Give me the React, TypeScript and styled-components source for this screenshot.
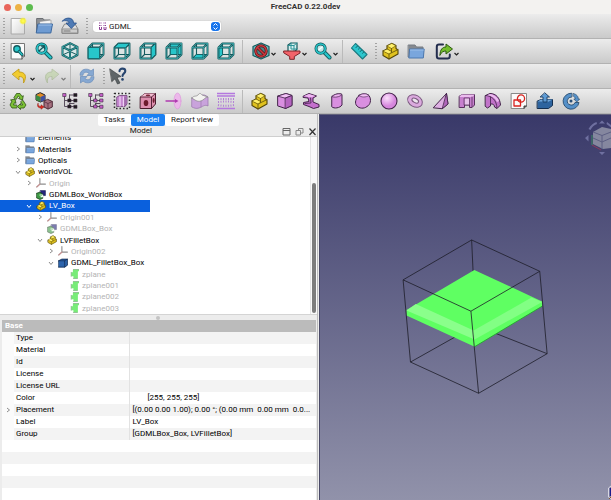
import React from "react";
import styled, { createGlobalStyle } from "styled-components";

const GlobalStyle = createGlobalStyle`
  * { box-sizing: border-box; }
  body { margin: 0; background: #ececec; color: #161616; font: 400 8px/12px Roboto, "Liberation Sans", sans-serif; }
  button, select { font: inherit; color: inherit; border: 0; padding: 0; margin: 0; background: none; }
  ul { list-style: none; margin: 0; padding: 0; }
`;

/* ---------- layout ---------- */

const Window = styled.div`
  display: flex;
  flex-direction: column;
  height: 100vh;
  overflow: hidden;
`;

const TitleBar = styled.header`
  display: grid;
  grid-template-columns: 1fr auto 1fr;
  align-items: center;
  height: 14px;
  flex: none;
  background: #f3f2f0;
`;

const Lights = styled.div`
  display: flex;
  gap: 4px;
  padding-left: 4px;
`;

const Light = styled.button<{ $color: string }>`
  width: 7px;
  height: 7px;
  border-radius: 50%;
  background: ${(p) => p.$color};
`;

const WindowTitle = styled.h1`
  margin: 0;
  font-size: 8px;
  line-height: 12px;
  font-weight: 700;
  color: #333;
`;

const Toolbar = styled.div`
  display: flex;
  align-items: center;
  height: 25px;
  flex: none;
  border-bottom: 1px solid #b2b2b2;
  background: linear-gradient(#ececec, #cacaca);
`;

const Handle = styled.span`
  width: 5px;
  height: 17px;
  flex: none;
  background: repeating-linear-gradient(#a2a2a2 0 1px, transparent 1px 3px) right / 2px 100% no-repeat;
`;

const Separator = styled.span`
  width: 1px;
  height: 23px;
  margin: 0 3px;
  flex: none;
  background: #bababa;
`;

const ToolButton = styled.button<{ $menu?: boolean; $faded?: boolean }>`
  display: flex;
  align-items: center;
  justify-content: ${(p) => (p.$menu ? "flex-end" : "center")};
  width: ${(p) => (p.$menu ? 31 : 26)}px;
  height: 22px;
  flex: none;
  opacity: ${(p) => (p.$faded ? 0.5 : 1)};
`;

const WorkbenchBox = styled.label`
  position: relative;
  display: flex;
  width: 128px;
  height: 11px;
  margin-left: 5px;
  border-radius: 3px;
  background: #fff;
  box-shadow: 0 0 1px #999;
`;

const WorkbenchSelect = styled.select`
  appearance: none;
  width: 100%;
  padding-left: 16px;
  line-height: 11px;
  outline: 0;
`;

const WorkbenchIcon = styled.span`
  position: absolute;
  left: 5px;
  top: 1px;
  display: flex;
`;

const Stepper = styled.span`
  position: absolute;
  right: 1px;
  top: 1px;
  display: flex;
  border-radius: 3px;
  background: #1674ec;
  pointer-events: none;
`;

const Workspace = styled.main`
  display: flex;
  flex: 1;
  min-height: 0;
`;

const SidePanel = styled.section`
  display: flex;
  flex-direction: column;
  flex: 0 0 52%;
  min-width: 0;
  background: #ececec;
  border-right: 1px solid #bdbdbd;
`;

const Tabs = styled.div`
  display: flex;
  justify-content: center;
  height: 12px;
  flex: none;
`;

const Tab = styled.button<{ $active?: boolean }>`
  padding: 0 6px;
  line-height: 12px;
  border-radius: 2px;
  background: ${(p) => (p.$active ? "#1a80f2" : "#fff")};
  color: ${(p) => (p.$active ? "#fff" : "#222")};
`;

const DockTitle = styled.div`
  display: flex;
  align-items: center;
  height: 11px;
  flex: none;
  border-bottom: 1px solid #cfcfcf;
`;

const DockName = styled.h2`
  flex: 1;
  margin: 0;
  text-align: center;
  font-size: 8px;
  line-height: 10px;
  font-weight: 400;
`;

const DockButtons = styled.div`
  display: flex;
  gap: 4px;
  button { display: flex; }
`;

const TreePane = styled.div`
  display: flex;
  align-items: flex-end;
  flex: 177 1 0;
  min-height: 0;
  overflow: hidden;
  background: #fff;
`;

const Tree = styled.ul`
  display: grid;
  grid-auto-rows: 1fr;
  height: 182px;
  flex: 1;
`;

const TreeRow = styled.li<{ $depth: number; $tone?: string }>`
  display: flex;
  align-items: center;
  gap: 2px;
  width: 150px;
  padding-left: ${(p) => 13 + p.$depth * 11}px;
  line-height: 11px;
  white-space: nowrap;
  background: ${(p) => (p.$tone === "selected" ? "#0a60dd" : "transparent")};
  color: ${(p) => (p.$tone === "selected" ? "#fff" : p.$tone === "hidden" ? "#b4b4b4" : "#000")};
`;

const Branch = styled.button`
  display: flex;
  justify-content: center;
  width: 10px;
  flex: none;
  color: #8c8c8c;
  li[aria-selected="true"] & { color: #fff; }
`;

const BranchSpace = styled.span`
  width: 10px;
  flex: none;
`;

const RowIcon = styled.span<{ $faded: boolean }>`
  display: flex;
  width: 11px;
  flex: none;
  opacity: ${(p) => (p.$faded ? 0.6 : 1)};
`;

const ScrollTrack = styled.div`
  display: flex;
  justify-content: center;
  align-items: flex-end;
  align-self: stretch;
  width: 7px;
  padding-bottom: 1px;
  border-left: 1px solid #e6e6e6;
  background: #fafafa;
`;

const ScrollThumb = styled.div`
  width: 4px;
  height: 74%;
  border-radius: 2px;
  background: #7d7d7d;
`;

const Splitter = styled.div`
  display: flex;
  justify-content: center;
  align-items: center;
  height: 6px;
  flex: none;
  border-top: 1px solid #d4d4d4;
  &::after { content: ""; width: 4px; height: 4px; border-radius: 50%; background: #c4c4c4; }
`;

const PropertyPane = styled.div`
  flex: 180 1 0;
  min-height: 0;
  overflow: hidden;
  margin: 0 1px 0 2px;
  background: repeating-linear-gradient(#fff 0 12px, #f3f3f3 12px 24px);
`;

const PropertyTable = styled.table`
  width: 100%;
  table-layout: fixed;
  border-collapse: collapse;
  text-align: left;
  color: #000;
  tr { height: 12px; }
  th, td { padding: 0; height: 12px; font-weight: 400; white-space: nowrap; overflow: hidden; text-overflow: ellipsis; }
  thead th { padding-left: 3px; background: #bbb; color: #fff; font-weight: 700; }
`;

const ToggleCell = styled.td`
  width: 12px;
  background: #fbfbfb;
  button { display: flex; margin: 0 auto; color: #8c8c8c; }
`;

const NameCell = styled.th`
  && { padding-left: 2px; }
  border-right: 1px solid #e2e2e2;
`;

const ValueCell = styled.td<{ $inset?: boolean }>`
  && { padding: 0 4px 0 ${(p) => (p.$inset ? 18 : 3)}px; white-space: pre; }
`;

const Viewport = styled.section`
  position: relative;
  flex: 1;
  min-width: 0;
  margin-left: 1px;
  overflow: hidden;
  border-left: 1px solid #4a4a68;
  border-top: 1px solid #62627c;
  background: linear-gradient(#393969, #9192aa);
`;

const Scene = styled.svg`
  display: block;
  width: 100%;
  height: 100%;
`;

const NavCube = styled.svg`
  position: absolute;
  top: 2px;
  right: 0;
`;

const AxisCross = styled.svg`
  position: absolute;
  right: 0;
  bottom: 0;
`;

/* ---------- icons ---------- */

const Svg = ({ size = 18, children }: { size?: number; children: React.ReactNode }) => (
  <svg width={size} height={size} viewBox="0 0 18 18" fill="none" strokeLinejoin="round" strokeLinecap="round" aria-hidden="true">
    {children}
  </svg>
);

const INK = "#145a5e";
const TEAL = "#27c6ca";

const Wire = ({ d, w = 1 }: { d: string; w?: number }) => (
  <>
    <path d={d} stroke={INK} strokeWidth={w + 1} />
    <path d={d} stroke="#45b4b6" strokeWidth={w * 0.7} />
  </>
);

const FACES: Record<string, string> = {
  front: "M1.500 5.500H12.500V16.500H1.500Z",
  top: "M1.500 5.500L5.500 1.500H16.500L12.500 5.500Z",
  right: "M12.500 5.500L16.500 1.500V12.500L12.500 16.500Z",
  rear: "M5.500 1.500H16.500V12.500H5.500Z",
  bottom: "M1.500 16.500L5.500 12.500H16.500L12.500 16.500Z",
  left: "M1.500 5.500L5.500 1.500V12.500L1.500 16.500Z",
};

const ViewCube = ({ face }: { face: string }) => {
  const behind = face === "rear" || face === "bottom" || face === "left";
  const fill = <path d={FACES[face]} fill={TEAL} stroke={INK} strokeWidth=".8" />;
  return (
    <Svg>
      <path d="M1.500 5.500L5.500 1.500H16.500V12.500L12.500 16.500H1.500Z" fill="#dcebea" fillOpacity=".6" />
      <path d="M5.500 1.500V12.500H16.500M5.500 12.500L1.500 16.500" stroke={INK} strokeWidth="1.100" />
      {behind && fill}
      <Wire d="M1.500 5.500H12.500V16.500H1.500ZM1.500 5.500L5.500 1.500H16.500L12.500 5.500M16.500 1.500V12.500L12.500 16.500" w={0.9} />
      {!behind && fill}
    </Svg>
  );
};

const IsoCube = () => (
  <Svg>
    <path d="M9 1.200L16.500 5V13L9 16.800L1.500 13V5Z" fill="#d8e9e8" />
    <path d="M9 1.200V9.500M1.500 13L9 9.500L16.500 13" stroke={INK} strokeWidth="1" />
    <Wire d="M9 1.200L16.500 5V13L9 16.800L1.500 13V5ZM1.500 5L9 8.500L16.500 5M9 8.500V16.500" w={1} />
  </Svg>
);

const Lens = () => (
  <>
    <path d="M10 10L15.500 15.500" stroke={INK} strokeWidth="4" />
    <path d="M10 10L15.500 15.500" stroke={TEAL} strokeWidth="2.400" />
    <circle cx="6.600" cy="6.600" r="4.600" stroke={INK} strokeWidth="3" fill="#c4e6e6" />
    <circle cx="6.600" cy="6.600" r="4.600" stroke={TEAL} strokeWidth="1.600" />
  </>
);

const FitAll = () => (
  <Svg>
    <path d="M2.500 1.500H15.500V14L13 17H2.500Z" fill="#fbfbfb" stroke="#777" />
    <path d="M15.500 14H13V17" fill="#ddd" stroke="#444" />
    <circle cx="8" cy="7" r="3.200" fill={TEAL} stroke={INK} strokeWidth="1.400" />
    <path d="M10.200 9.400L13 12.600" stroke={INK} strokeWidth="3" />
    <path d="M10.200 9.400L13 12.600" stroke={TEAL} strokeWidth="1.400" />
  </Svg>
);

const FitSelection = () => (
  <Svg>
    <Lens />
    <path d="M4 9L9.500 4M6.500 4H9.500V7" stroke={INK} strokeWidth="1.300" />
  </Svg>
);

const ZoomIcon = () => (
  <Svg>
    <Lens />
    <path d="M5 7.500L8.200 5" stroke="#f4ffff" strokeWidth="1.400" />
  </Svg>
);

const NoEntry = () => (
  <Svg>
    <path d="M9 1L17 4.500V13.500L9 17L1 13.500V4.500Z" fill="#6cc3c6" stroke={INK} strokeWidth="1.200" />
    <circle cx="9" cy="9" r="5.300" fill="#4c8286" stroke="#5a1418" strokeWidth="3" />
    <path d="M5.500 5.500L12.500 12.500" stroke="#5a1418" strokeWidth="3" />
    <circle cx="9" cy="9" r="5.300" stroke="#cc3a40" strokeWidth="1.500" />
    <path d="M5.500 5.500L12.500 12.500" stroke="#cc3a40" strokeWidth="1.500" />
  </Svg>
);

const Funnel = () => (
  <Svg>
    <path d="M5 3L8 1H14V7L11.500 10H5Z" fill="#d5efef" stroke={INK} strokeWidth="1.200" />
    <path d="M5 3.500H11V9.500M11 3.500L14 1M8 1V7H14" stroke="#2c9498" strokeWidth="1" />
    <path d="M1 9H17V11L11.300 14.500V17.300H6.700V14.500L1 11Z" fill="#f2636a" stroke="#7c2227" strokeWidth="1" />
  </Svg>
);

const Ruler = () => (
  <Svg>
    <path d="M5.500 1.500L17 12.500L12.500 17L1.500 6Z" fill="#2cc6cd" stroke="#1c7b81" strokeWidth="1.100" />
    <path d="M7.300 4.200L6 5.600M9.400 6.200L8.400 7.200M11.500 8.200L10.200 9.600M13.600 10.200L12.600 11.200" stroke="#0d585e" strokeWidth=".9" />
  </Svg>
);

const Part = ({ size = 18 }: { size?: number }) => (
  <Svg size={size}>
    <path d="M2 9L6 7V4L11 1.500L15 3.500V6.500L17 8V12L8 17L2 13.500Z" fill="#e0c21e" stroke="#54470a" strokeWidth="1.100" />
    <path d="M6 4L10.500 6.500L15 3.800L11 1.500Z" fill="#fff06a" stroke="#6a5a0e" strokeWidth=".7" />
    <path d="M2 9L8 12L17 7.600M8 12V17M10.500 6.500V10.500M6 7L10.500 9.500" stroke="#6a5a0e" strokeWidth=".9" />
    <path d="M2.600 9L6 7.400L10 9.800L8 11.400Z" fill="#fff06a" />
  </Svg>
);

const Folder = ({ size = 18 }: { size?: number }) => (
  <Svg size={size}>
    <path d="M1.500 3H8L9.500 5H16V15H1.500Z" fill="#85898f" stroke="#777c84" />
    <path d="M3 7H17.200L16.300 16H2.200Z" fill="#79a6dd" stroke="#4d78ae" />
    <path d="M3.500 8H16.400" stroke="#a8c8ef" strokeWidth=".8" />
  </Svg>
);

const LinkIcon = () => (
  <Svg>
    <path d="M8 2.500H4Q1.800 2.500 1.800 4.700V14Q1.800 16.500 4 16.500H12.500Q14.800 16.500 14.800 14V12.500" stroke="#232d4e" strokeWidth="2" />
    <path d="M5 13C5 7.500 7.500 5 11 5V2L17.500 7L11 12V9C8.500 9 6.500 10 5 13Z" fill="#73bd2d" stroke="#2d5a12" strokeWidth="1" />
  </Svg>
);

const NewFile = () => (
  <Svg>
    <defs>
      <linearGradient id="sheet" x2="1" y2="1"><stop stopColor="#fff" /><stop offset="1" stopColor="#d8d8d8" /></linearGradient>
      <radialGradient id="spark"><stop stopColor="#ffff5e" /><stop offset=".55" stopColor="#f6ef3c" /><stop offset="1" stopColor="#f8f35a" stopOpacity="0" /></radialGradient>
    </defs>
    <path d="M2.500 1.500H15.500V17H2.500Z" fill="url(#sheet)" stroke="#aaa" />
    <circle cx="14" cy="4" r="4" fill="url(#spark)" />
  </Svg>
);

const OpenFile = () => (
  <Svg>
    <path d="M2 1.500H8L9 3H15V15H2Z" fill="#8c8f93" stroke="#6d7074" />
    <path d="M5 4.500L16 3V10H5Z" fill="#f4f4f4" stroke="#999" strokeWidth=".7" />
    <path d="M3.200 7H17.500L15.800 16H1.600Z" fill="#6e9bd2" stroke="#3c689f" />
    <path d="M4 8H16.400" stroke="#9fc1ea" />
  </Svg>
);

const SaveFile = () => (
  <Svg>
    <path d="M4 7H14L17 12V16.500H1V12Z" fill="#dedede" stroke="#888" />
    <path d="M1.500 12H16.500V16H1.500Z" fill="#cdcdcd" stroke="#909090" />
    <path d="M3 14H9" stroke="#777" strokeWidth="1.200" />
    <path d="M1.500 4C4 0 12.500 -.5 12.500 6H15.500L10.300 11.500L5 6H8C8 4 5 3 1.500 4Z" fill="#4f7bb5" stroke="#28508a" strokeWidth=".8" />
  </Svg>
);

const Undo = () => (
  <Svg>
    <path d="M1.500 7L8 2V5C14 5 16.500 9 12.500 16C13 11.500 12 9.500 8 9.500V12.500Z" fill="#f2cc2f" stroke="#c19a14" strokeWidth=".9" />
  </Svg>
);

const Redo = () => (
  <Svg>
    <path d="M16.500 7L10 2V5C4 5 1.500 9 5.500 16C5 11.500 6 9.500 10 9.500V12.500Z" fill="#b4cf93" stroke="#8ca56d" strokeWidth=".9" />
  </Svg>
);

const Refresh = () => (
  <Svg>
    <path d="M2 8C2 2 9 .5 13 4L15.500 2V8.500H9L11 6.300C8.500 4.400 5.500 5 5 8Z" fill="#86a8d2" stroke="#6a8cb9" strokeWidth=".7" />
    <path d="M16 10C16 16 9 17.500 5 14L2.500 16V9.500H9L7 11.700C9.500 13.600 12.500 13 13 10Z" fill="#86a8d2" stroke="#6a8cb9" strokeWidth=".7" />
  </Svg>
);

const WhatsThis = () => (
  <Svg>
    <path d="M1 2L12 9.500L8 10.500L11 16L8.500 17L6 11.800L3 14.500Z" fill="#5f6568" stroke="#3d4244" strokeWidth=".7" />
    <path d="M10.500 4.300C10.500 .6 16.300 1 16.300 4C16.300 6.500 13.500 6.300 13.500 9" stroke="#27456f" strokeWidth="2.100" />
    <circle cx="13.500" cy="12.400" r="1.300" fill="#27456f" />
  </Svg>
);

const Recycle = () => (
  <Svg>
    <g fill="#7cc136" stroke="#2f5513" strokeWidth=".8">
      <path d="M5 5.500L7.500 1.500H11L13 4.500L14.300 3.700L13.500 8L9.500 6.500L10.800 5.800L9.300 3.800L7.500 7Z" />
      <path d="M14 8.500L17 13L15 16H11.500V17.500L8.500 14.500L11.500 11.500V13H13.600L11.800 10Z" />
      <path d="M7.500 16H3L1 13L3 9L1.500 8L6 7L7 11.300L5.600 10.500L4.500 13H7.500Z" />
    </g>
  </Svg>
);

const ColourMap = () => (
  <Svg>
    <path d="M5.500 .8L10 3V8L5.500 10L1 8V3Z" fill="#e28b25" stroke="#222" />
    <path d="M1 3L5.500 5V10L1 8Z" fill="#3b8a45" />
    <path d="M5.500 5L10 3V8L5.500 10Z" fill="#3f51a0" />
    <path d="M13 7.500L17.300 9.500V15L13 17L9 15V9.500Z" fill="#a5707f" stroke="#4c2b37" />
    <path d="M9 9.500L13 11.500V17M13 11.500L17.300 9.500" stroke="#5b3040" strokeWidth=".8" />
    <path d="M3 11.500C3 14 4.500 14.500 6 14.500V12.800L9 15L6 17.200V15.900C3 16 1.800 14 3 11.500Z" fill="#e12b1f" stroke="#8d1410" strokeWidth=".5" />
  </Svg>
);

const TreeIcon = ({ node }: { node: string }) => (
  <Svg>
    <path d="M3.500 3V14.500H13M3.500 8.500H13M8.500 3V8.500M8.500 11.500V14.500M8.500 3H13M8.500 11.500H13" stroke="#5a4f5e" strokeWidth="1" />
    <path d="M2 1.500H5V4.500H2Z" fill="#c45fc8" stroke="#3c2840" strokeWidth=".6" />
    <g fill={node} stroke="#3c2840" strokeWidth=".6">
      <path d="M7 7H10V10H7ZM7 13H10V16H7ZM13 1.500H16V4.500H13ZM13 7H16V10H13ZM13 13.300H16V16.300H13Z" />
    </g>
  </Svg>
);

const BoundBox = () => (
  <Svg>
    <path d="M1.500 1.500H16.500V16.500H1.500Z" stroke="#2c2c2c" strokeWidth="1.500" strokeDasharray="1.500 2" strokeLinecap="butt" />
    <path d="M4 5L6.500 3.500H14V12L12 14.500H4Z" fill="#c487cf" stroke="#71417b" strokeWidth=".8" />
    <path d="M7 5V14M10.500 5V14" stroke="#efd1f4" strokeWidth="1.300" />
    <path d="M12 5V14" stroke="#71417b" strokeWidth=".8" />
  </Svg>
);

const Dice = () => (
  <Svg>
    <path d="M1.500 5L6 1.500H16.500V12L12.500 16.500H1.500Z" fill="#dd8fae" stroke="#4a1a2c" />
    <path d="M1.500 5L6 1.500H16.500L12.500 5Z" fill="#f3bdd1" />
    <path d="M1.500 5H12.500V16.500M12.500 5L16.500 1.500" stroke="#4a1a2c" strokeWidth=".9" />
    <ellipse cx="9" cy="3.300" rx="2.300" ry=".9" fill="#7b2438" />
    <ellipse cx="7" cy="11" rx="2.300" ry="3.100" fill="#6d1a2d" />
    <ellipse cx="14.600" cy="8.500" rx="1" ry="2.400" fill="#6d1a2d" />
  </Svg>
);

const Project = () => (
  <Svg>
    <ellipse cx="12.500" cy="9" rx="3.500" ry="8" fill="#ecb8ea" stroke="#dd9adb" strokeWidth=".7" />
    <path d="M1 9H10" stroke="#b03ab0" strokeWidth="1.300" />
    <path d="M10 7L13.500 9L10 11Z" fill="#b03ab0" />
  </Svg>
);

const Surface = () => (
  <Svg>
    <path d="M1 6C4 9 8 6 10 4C12 2 14 3 17 5V14C14 12 11 15 8 16C5 17 3 16 1 15Z" fill="#c9a3dc" stroke="#9d7ab0" strokeWidth=".8" />
    <path d="M1 6C3 3 5 5 7 3C9 0 10 2 11 3L17 5C14 5 13 8 10 9C6 10 4 8 1 6Z" fill="#f3f3f0" stroke="#888" strokeWidth=".7" />
    <path d="M10 9V15" stroke="#9d7ab0" strokeWidth=".7" />
  </Svg>
);

const Grid = () => (
  <Svg>
    <path d="M0 1.500H18M0 4H18M0 16.500H18" stroke="#b478de" strokeWidth="1.500" strokeLinecap="butt" />
    <path d="M1 7H17M1 10Q9 9 17 10M1 13Q9 14.500 17 13" stroke="#b27fd6" strokeWidth="2" strokeDasharray="1 1.500" strokeLinecap="butt" />
  </Svg>
);

const PINK = "#d98fe0";
const EDGE = "#43234a";

const PinkBox = () => (
  <Svg>
    <path d="M2 4L10 1.500L16 3.500V13.500L9.500 16.500L2 14Z" fill={PINK} stroke={EDGE} />
    <path d="M2 4L10 1.500L16 3.500L9.500 6Z" fill="#f3c1f6" stroke={EDGE} strokeWidth=".8" />
    <path d="M9.500 6L16 3.500V13.500L9.500 16.500Z" fill="#b564c0" stroke={EDGE} strokeWidth=".8" />
  </Svg>
);

const Sweep = () => (
  <Svg>
    <path d="M1.500 4L7 1.500L14.500 4L11 6L11 10L17 12.500V15L11.500 16.500L7 14.500L1.500 12.500V10.500L7 9.500L6 6L1.500 5.500Z" fill="#c470cd" stroke={EDGE} />
    <path d="M2 4L7 2L13.500 4L8.500 5.600Z" fill="#efb9f3" />
    <path d="M8.500 6L9 11L3 11.500" stroke={EDGE} strokeWidth=".8" />
  </Svg>
);

const CutTube = () => (
  <Svg>
    <path d="M4 4.500C6 2 12 1 14 2.500V13C12 16 6 17 4 15Z" fill={PINK} stroke={EDGE} />
    <path d="M4 4.500C6 2 12 1 14 2.500C12 5 6 6 4 4.500Z" fill="#f0b5f3" stroke={EDGE} strokeWidth=".7" />
  </Svg>
);

const Ellipsoid = () => (
  <Svg>
    <path d="M5 3.500C8 1 13 1.500 15 3.500C18 8 16 13 13 14.500C10 17 5 16.500 3 14C0 11 2 6 5 3.500Z" fill={PINK} stroke={EDGE} />
    <path d="M5 3.500C7 5.500 12 5.500 15 3.500C12 1 8 1.500 5 3.500Z" fill="#f3bff5" stroke={EDGE} strokeWidth=".6" />
  </Svg>
);

const Ball = () => (
  <Svg>
    <defs>
      <radialGradient id="ball" cx=".38" cy=".32"><stop stopColor="#fbe0fc" /><stop offset="1" stopColor="#d687dd" /></radialGradient>
    </defs>
    <circle cx="9" cy="9" r="8" fill="url(#ball)" stroke={EDGE} strokeWidth="1.100" />
  </Svg>
);

const Torus = () => (
  <Svg>
    <g transform="rotate(28 9 9)">
      <ellipse cx="9" cy="9" rx="7.800" ry="5.800" fill="#dbaade" stroke="#7b5a80" />
      <ellipse cx="9" cy="8.500" rx="3.600" ry="2" fill="#ebe4ec" stroke="#7b5a80" />
    </g>
  </Svg>
);

const Tetra = () => (
  <Svg>
    <path d="M1.500 15.500L14.500 1.500L16 12L10.500 16.500Z" fill="#deb0e3" stroke={EDGE} />
    <path d="M14.500 1.500L16 12L10.500 16.500Z" fill="#b066ba" stroke={EDGE} strokeWidth=".8" />
  </Svg>
);

const Extrude = () => (
  <Svg>
    <path d="M1.500 4L4.500 2.500H16.500V13L14 15.500H11.500V13H6.500V15.500H1.500Z" fill="#c77fce" stroke="#58305e" />
    <path d="M1.500 4L4.500 2.500H16.500L14.500 5H2Z" fill="#ebbcee" />
    <path d="M6.500 6H11.500V13H6.500Z" fill="#e7c3ea" stroke="#58305e" strokeWidth=".8" />
    <path d="M14 5V15" stroke="#58305e" strokeWidth=".8" />
  </Svg>
);

const SweptArc = () => (
  <Svg>
    <path d="M1.500 3.500L6 1.500C12 1.500 16 6 16.500 13L13 16.500L10.500 15C10.500 13 9 11.500 6.500 12V14L3.500 16L1.500 14.500Z" fill="#c173c9" stroke={EDGE} />
    <path d="M2 3.500C8 4 12.500 8 13 16M6.500 5V12" stroke={EDGE} strokeWidth=".8" />
    <path d="M3 3.300L6 2C10 2.500 13.500 5 15 9L13 10C11.500 6.500 8 4 3 3.300Z" fill="#ecbcf0" />
  </Svg>
);

const Sketch = () => (
  <Svg>
    <path d="M1.500 1.500H16.500V14L14 16.500H1.500Z" fill="#fafafa" stroke="#888" />
    <path d="M16.500 14H14V16.500" fill="#555" stroke="#444" />
    <path d="M4 8H10.500V14H4Z" stroke="#d9231f" strokeWidth="1.300" />
    <circle cx="11" cy="6.500" r="3.600" stroke="#d9231f" strokeWidth="1.300" />
  </Svg>
);

const Pad = () => (
  <Svg>
    <path d="M1.500 9L5 7.500H16.500V13.500L12.500 16.500H1.500Z" fill="#2d649f" stroke="#142f50" />
    <path d="M1.500 9.500L5 7.500H16.500L12.500 9.800Z" fill="#6fa5d8" />
    <path d="M9 1L13.500 5H11V10H7V5H4.500Z" fill="#5d9ad4" stroke="#173a61" strokeWidth=".9" />
  </Svg>
);

const Revolve = () => (
  <Svg>
    <path d="M9.500 1.200A8 8 0 1 0 17 10.500H13A4 4 0 1 1 9.500 5Z" fill="#5590c8" stroke="#1d4164" strokeWidth=".8" />
    <path d="M11.500 1.500C15 2.500 16.300 4.500 16.300 7H17.700L14.800 10L11.800 7H13.300C13.200 5.500 12.500 4.800 11.500 4.300Z" fill="#5590c8" stroke="#1d4164" strokeWidth=".6" />
    <circle cx="9" cy="9" r="1.500" fill="#284f78" />
  </Svg>
);

const MenuArrow = () => (
  <svg width="7" height="18" viewBox="0 0 7 18" fill="none" stroke="#222" strokeWidth="1.200" aria-hidden="true">
    <path d="M1.500 11L3.500 13L5.500 11" />
  </svg>
);

const BranchArrow = ({ open }: { open?: boolean }) => (
  <svg width="6" height="6" viewBox="0 0 6 6" fill="none" stroke="currentColor" aria-hidden="true">
    <path d={open ? "M1 2L3 4.500L5 2" : "M2 1L4.500 3L2 5"} />
  </svg>
);

const OriginIcon = () => (
  <Svg size={10}>
    <path d="M7 1V11H17M7 11L1.500 16" stroke="#444" strokeWidth="2" />
    <path d="M7 11L1.500 16" stroke="#a44" strokeWidth="2" />
  </Svg>
);

const SolidIcon = () => (
  <Svg size={10}>
    <path d="M8 1H17V10H8Z" fill="#26267c" stroke="#15154d" />
    <path d="M1 6L7 4L12 7V15L7 17L1 14Z" fill="#3f9a45" stroke="#173c1a" strokeWidth="1.500" />
    <path d="M7 9H12V12H9" stroke="#f2fff0" strokeWidth="2" />
  </Svg>
);

const BlueBox = () => (
  <Svg size={10}>
    <path d="M1 5L7 2H17V13L12 16.500H1Z" fill="#2c63ab" stroke="#10294f" strokeWidth="1.400" />
    <path d="M1 5H12V16.500M12 5L17 2" stroke="#10294f" strokeWidth="1.200" />
  </Svg>
);

const PlaneIcon = () => (
  <Svg size={10}>
    <path d="M7 1H18V4H16V17H8V13H4V6H7Z" fill="#1fe01f" />
    <path d="M4 6V13M8 1H18M8 17H15" stroke="#37803a" strokeWidth="1.400" />
  </Svg>
);

const TREE_ICONS: Record<string, React.ReactNode> = {
  folder: <Folder size={10} />,
  part: <Part size={10} />,
  origin: <OriginIcon />,
  solid: <SolidIcon />,
  box: <BlueBox />,
  plane: <PlaneIcon />,
};

/* ---------- data ---------- */

type Node = { name: string; icon: string; depth: number; open?: boolean; tone?: "hidden" | "selected" };

const NODES: Node[] = [
  { name: "Elements", icon: "folder", depth: 0 },
  { name: "Materials", icon: "folder", depth: 0, open: false },
  { name: "Opticals", icon: "folder", depth: 0, open: false },
  { name: "worldVOL", icon: "part", depth: 0, open: true },
  { name: "Origin", icon: "origin", depth: 1, open: false, tone: "hidden" },
  { name: "GDMLBox_WorldBox", icon: "solid", depth: 1 },
  { name: "LV_Box", icon: "part", depth: 1, open: true, tone: "selected" },
  { name: "Origin001", icon: "origin", depth: 2, open: false, tone: "hidden" },
  { name: "GDMLBox_Box", icon: "solid", depth: 2, tone: "hidden" },
  { name: "LVFilletBox", icon: "part", depth: 2, open: true },
  { name: "Origin002", icon: "origin", depth: 3, open: false, tone: "hidden" },
  { name: "GDML_FilletBox_Box", icon: "box", depth: 3, open: true },
  { name: "zplane", icon: "plane", depth: 4, tone: "hidden" },
  { name: "zplane001", icon: "plane", depth: 4, tone: "hidden" },
  { name: "zplane002", icon: "plane", depth: 4, tone: "hidden" },
  { name: "zplane003", icon: "plane", depth: 4, tone: "hidden" },
];

const PROPERTIES: [string, string][] = [
  ["Type", ""],
  ["Material", ""],
  ["Id", ""],
  ["License", ""],
  ["License URL", ""],
  ["Color", "[255, 255, 255]"],
  ["Placement", "[(0.00 0.00 1.00); 0.00 °; (0.00 mm  0.00 mm  0.0..."],
  ["Label", "LV_Box"],
  ["Group", "[GDMLBox_Box, LVFilletBox]"],
];

type Tool = [label: string, icon: React.ReactNode];

const VIEW_TOOLS: Tool[] = [
  ["Fit all", <FitAll />],
  ["Fit selection", <FitSelection />],
  ["Isometric", <IsoCube />],
  ...["front", "top", "right", "rear", "bottom", "left"].map((f): Tool => [`View ${f}`, <ViewCube face={f} />]),
];

const GDML_TOOLS: Tool[] = [
  ["Cycle", <Recycle />],
  ["Colour map", <ColourMap />],
  ["Expand volume", <TreeIcon node="#1c1c1c" />],
  ["Expand all", <TreeIcon node="#c45fc8" />],
  ["Bounding box", <BoundBox />],
  ["Boolean", <Dice />],
  ["Project", <Project />],
  ["Tessellate", <Surface />],
  ["Mesh", <Grid />],
];

const SOLID_TOOLS: Tool[] = [
  ["Part", <Part />],
  ["Box", <PinkBox />],
  ["Extrusion", <Sweep />],
  ["Elliptical tube", <CutTube />],
  ["Ellipsoid", <Ellipsoid />],
  ["Sphere", <Ball />],
  ["Torus", <Torus />],
  ["Tetrahedron", <Tetra />],
  ["Extruded profile", <Extrude />],
  ["Swept profile", <SweptArc />],
  ["Sketch", <Sketch />],
  ["Pad", <Pad />],
  ["Revolve", <Revolve />],
];

const Tools = ({ items, menu }: { items: Tool[]; menu?: boolean }) => (
  <>
    {items.map(([label, icon]) => (
      <ToolButton key={label} aria-label={label} $menu={menu}>
        {icon}
        {menu && <MenuArrow />}
      </ToolButton>
    ))}
  </>
);

/* ---------- scene ---------- */

const Model3D = () => (
  <Scene viewBox="319 114 292 386" role="img" aria-label="Filleted box inside its world volume">
    <path d="M409.700 361.700L475 325L546.700 353.300M471 239.300L475 325" fill="none" stroke="#1d1d28" strokeWidth=".8" />
    <path d="M473.700 269.300L541.700 301V305.700L474 346.300L405.700 315V309.500Z" fill="#5fff62" />
    <path d="M405.700 310L415 303.500L473 330L474 339Z" fill="#8aff8b" />
    <path d="M531 297L541.700 301.500L474 339L473 330Z" fill="#82ff84" />
    <path d="M474 346.300L541.700 305.700" fill="none" stroke="#22a82c" strokeWidth=".9" />
    <path
      d="M402.300 279.300L471 239.300L539.300 270.700L470.300 310.700ZM402.300 279.300L409.700 361.700L478 393L546.700 353.300L539.300 270.700M470.300 310.700L478 393"
      fill="none"
      stroke="#1d1d28"
      strokeWidth=".8"
    />
  </Scene>
);

export default function App() {
  return (
    <>
      <GlobalStyle />
      <Window>
        <TitleBar>
          <Lights>
            <Light $color="#e9655a" aria-label="Close" />
            <Light $color="#edb244" aria-label="Minimize" />
            <Light $color="#5dbc4e" aria-label="Zoom" />
          </Lights>
          <WindowTitle>FreeCAD 0.22.0dev</WindowTitle>
        </TitleBar>

        <Toolbar>
          <Handle />
          <Tools items={[["New", <NewFile />], ["Open", <OpenFile />], ["Save", <SaveFile />]]} />
          <Handle />
          <WorkbenchBox>
            <WorkbenchIcon>
              <svg width="9" height="9" viewBox="0 0 9 9" fill="none" stroke="#8d3f93" aria-hidden="true">
                <path d="M1 1H3.500M1 3.500H3.500M5.500 1H8M5.500 3.500H8" strokeDasharray="1 .5" />
                <path d="M1.500 5V7.500H3.500V5M6 5V7.500H8V5" />
              </svg>
            </WorkbenchIcon>
            <WorkbenchSelect aria-label="Workbench" defaultValue="GDML">
              <option>GDML</option>
            </WorkbenchSelect>
            <Stepper>
              <svg width="9" height="9" viewBox="0 0 9 9" fill="none" stroke="#fff" aria-hidden="true">
                <path d="M2.500 3.500L4.500 1.500L6.500 3.500M2.500 5.500L4.500 7.500L6.500 5.500" />
              </svg>
            </Stepper>
          </WorkbenchBox>
        </Toolbar>

        <Toolbar>
          <Handle />
          <Tools items={VIEW_TOOLS} />
          <Separator />
          <Tools menu items={[["Draw style", <NoEntry />], ["Selection filter", <Funnel />], ["Zoom", <ZoomIcon />]]} />
          <Separator />
          <Tools items={[["Measure", <Ruler />]]} />
          <Handle />
          <Tools items={[["Create part", <Part />], ["Create group", <Folder />]]} />
          <Tools menu items={[["Make link", <LinkIcon />]]} />
        </Toolbar>

        <Toolbar>
          <Handle />
          <Tools menu items={[["Undo", <Undo />]]} />
          <ToolButton $menu $faded aria-label="Redo">
            <Redo />
            <MenuArrow />
          </ToolButton>
          <Separator />
          <Tools items={[["Refresh", <Refresh />]]} />
          <Handle />
          <Tools items={[["What's this?", <WhatsThis />]]} />
        </Toolbar>

        <Toolbar>
          <Handle />
          <Tools items={GDML_TOOLS} />
          <Separator />
          <Tools items={SOLID_TOOLS} />
        </Toolbar>

        <Workspace>
          <SidePanel>
            <Tabs role="tablist">
              <Tab role="tab">Tasks</Tab>
              <Tab role="tab" aria-selected $active>Model</Tab>
              <Tab role="tab">Report view</Tab>
            </Tabs>
            <DockTitle>
              <DockName>Model</DockName>
              <DockButtons>
                <button aria-label="Collapse">
                  <svg width="9" height="9" viewBox="0 0 9 9" fill="none" stroke="#666"><path d="M1 1.500H8V8H1ZM1 3.500H8" /></svg>
                </button>
                <button aria-label="Float">
                  <svg width="9" height="9" viewBox="0 0 9 9" fill="none" stroke="#888"><path d="M3.500 3V1.500H8V6H6M1 3.500H5.500V8H1Z" /></svg>
                </button>
                <button aria-label="Close panel">
                  <svg width="9" height="9" viewBox="0 0 9 9" fill="none" stroke="#333" strokeWidth="1.200"><path d="M1.500 1.500L7.500 8M7.500 1.500L1.500 8" /></svg>
                </button>
              </DockButtons>
            </DockTitle>

            <TreePane>
              <Tree role="tree" aria-label="Model">
                {NODES.map((n) => (
                  <TreeRow key={n.name} role="treeitem" aria-selected={n.tone === "selected"} $depth={n.depth} $tone={n.tone}>
                    {n.open === undefined ? (
                      <BranchSpace />
                    ) : (
                      <Branch aria-label={`Toggle ${n.name}`}>
                        <BranchArrow open={n.open} />
                      </Branch>
                    )}
                    <RowIcon $faded={n.tone === "hidden"}>{TREE_ICONS[n.icon]}</RowIcon>
                    <span>{n.name}</span>
                  </TreeRow>
                ))}
              </Tree>
              <ScrollTrack>
                <ScrollThumb />
              </ScrollTrack>
            </TreePane>

            <Splitter />

            <PropertyPane>
              <PropertyTable>
                <colgroup>
                  <col width="12" />
                  <col width="115" />
                  <col />
                </colgroup>
                <thead>
                  <tr>
                    <th colSpan={3}>Base</th>
                  </tr>
                </thead>
                <tbody>
                  {PROPERTIES.map(([name, value]) => (
                    <tr key={name}>
                      <ToggleCell>
                        {name === "Placement" && (
                          <button aria-label="Expand Placement">
                            <BranchArrow />
                          </button>
                        )}
                      </ToggleCell>
                      <NameCell scope="row">{name}</NameCell>
                      <ValueCell $inset={name === "Color"}>{value}</ValueCell>
                    </tr>
                  ))}
                </tbody>
              </PropertyTable>
            </PropertyPane>
          </SidePanel>

          <Viewport>
            <Model3D />
            <NavCube width="27" height="38" viewBox="0 0 27 38" fill="#6f70a0" aria-hidden="true">
              <path d="M4.500 12C7 8 9 6 12.500 5L13 7C10 8 8 10 6.500 13ZM18 3.500L21 6.500H15ZM1 21L4.500 18V24.500ZM18 38L15 35H21ZM23 5L27 8V10.500L22.500 7Z" />
              <path d="M9 15L18 10L27 12V31L19 32L9 27Z" fill="#85879f" />
              <path d="M9 15L18 18.500L27 15M18 18.500V32M9 21L18 25L27 21" fill="none" stroke="#5d5f83" />
              <path d="M8 28L17 33" fill="none" stroke="#8a3a5c" />
              <path d="M8 18V28" fill="none" stroke="#3a8a62" />
            </NavCube>
            <AxisCross width="4" height="15" viewBox="0 0 4 15" fill="none" aria-hidden="true">
              <path d="M4 1L1.500 3V12L4 14" stroke="#d8d8e2" />
              <path d="M3.500 3V11" stroke="#1c1c8a" strokeWidth="1.500" />
              <path d="M4 12L2 14" stroke="#8a5a2c" />
            </AxisCross>
          </Viewport>
        </Workspace>
      </Window>
    </>
  );
}
